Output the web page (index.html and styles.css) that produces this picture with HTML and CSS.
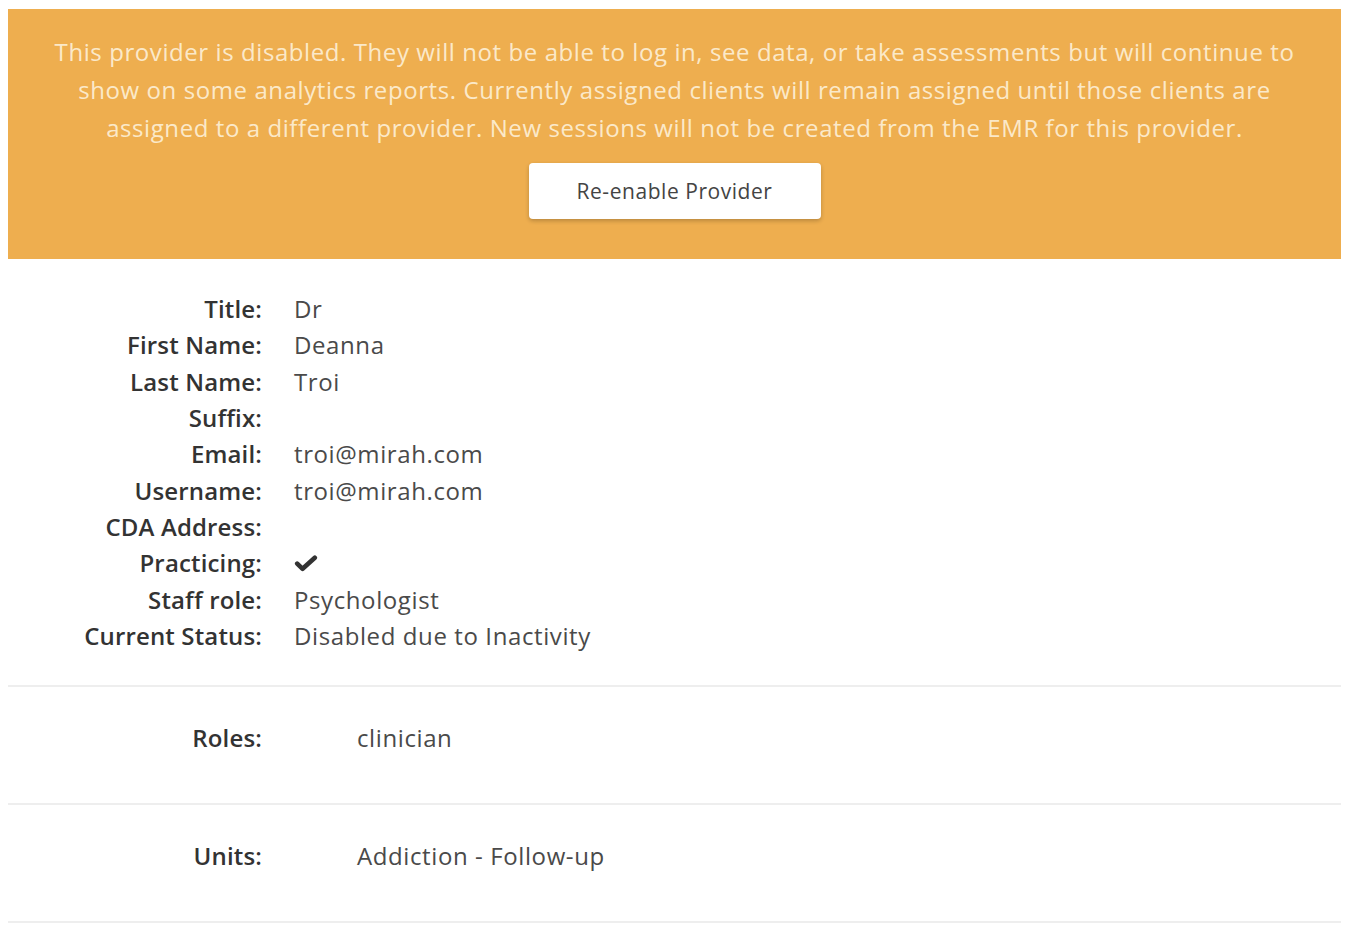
FILE: index.html
```html
<!DOCTYPE html>
<html lang="en">
<head>
<meta charset="utf-8">
<title>Provider</title>
<link rel="stylesheet" href="styles.css">
</head>
<body>
<div class="banner">
  <p class="banner-text">This provider is disabled. They will not be able to log in, see data, or take assessments but will continue to show on some analytics reports. Currently assigned clients will remain assigned until those clients are assigned to a different provider. New sessions will not be created from the EMR for this provider.</p>
  <button class="btn" type="button">Re-enable Provider</button>
</div>

<dl class="details">
  <dt>Title:</dt><dd>Dr</dd>
  <dt>First Name:</dt><dd>Deanna</dd>
  <dt>Last Name:</dt><dd>Troi</dd>
  <dt>Suffix:</dt><dd></dd>
  <dt>Email:</dt><dd>troi@mirah.com</dd>
  <dt>Username:</dt><dd>troi@mirah.com</dd>
  <dt>CDA Address:</dt><dd></dd>
  <dt>Practicing:</dt><dd><svg class="check" viewBox="0 0 24 17" width="24" height="17" aria-hidden="true"><path d="M3.2 8.6 L8.6 13.8 L20.8 2.8" fill="none" stroke="#333" stroke-width="4.6" stroke-linecap="round" stroke-linejoin="round"/></svg></dd>
  <dt>Staff role:</dt><dd>Psychologist</dd>
  <dt>Current Status:</dt><dd>Disabled due to Inactivity</dd>
</dl>

<div class="section">
  <div class="section-label">Roles:</div>
  <div class="section-value">clinician</div>
</div>
<div class="section">
  <div class="section-label">Units:</div>
  <div class="section-value">Addiction - Follow-up</div>
</div>
</body>
</html>
```

FILE: styles.css
```css
html, body {
  background: #ffffff;
}

body {
  margin: 9px 11px 0 8px;
  font-family: "Open Sans", "Noto Sans", sans-serif;
  color: #444;
}

.banner {
  background: #eeae4f;
  padding: 24px 38px 40px;
  display: flex;
  flex-direction: column;
  align-items: center;
}

.banner-text {
  margin: 0;
  text-align: center;
  font-size: 24px;
  letter-spacing: 0.58px;
  line-height: 38px;
  color: rgba(255, 250, 235, 0.8);
}

.btn {
  margin-top: 16px;
  width: 292px;
  height: 56px;
  background: #fff;
  border: none;
  border-radius: 4px;
  box-shadow: 0 2px 4px rgba(0, 0, 0, 0.22);
  font-family: "Open Sans", "Noto Sans", sans-serif;
  font-size: 21px;
  letter-spacing: 0.55px;
  color: #444;
  cursor: pointer;
}

.details {
  margin: 32px 0 0;
  padding-bottom: 31px;
  display: grid;
  grid-template-columns: 254px 1fr;
  column-gap: 32px;
  font-size: 24px;
  line-height: 36.33px;
  border-bottom: 2px solid #eeeeee;
}

.details dt {
  text-align: right;
  font-weight: 600;
  letter-spacing: 0.15px;
  color: #333;
}

.details dd {
  margin: 0;
  color: #4a4a4a;
  letter-spacing: 0.6px;
  min-height: 36.33px;
  display: flex;
  align-items: center;
}

.check {
  display: block;
}

.section {
  display: grid;
  grid-template-columns: 254px 1fr;
  column-gap: 95px;
  padding: 33px 0 47px;
  font-size: 24px;
  line-height: 36px;
  border-bottom: 2px solid #eeeeee;
}

.section-label {
  text-align: right;
  font-weight: 600;
  letter-spacing: 0.15px;
  color: #333;
}

.section-value {
  color: #4a4a4a;
  letter-spacing: 0.6px;
}
```
